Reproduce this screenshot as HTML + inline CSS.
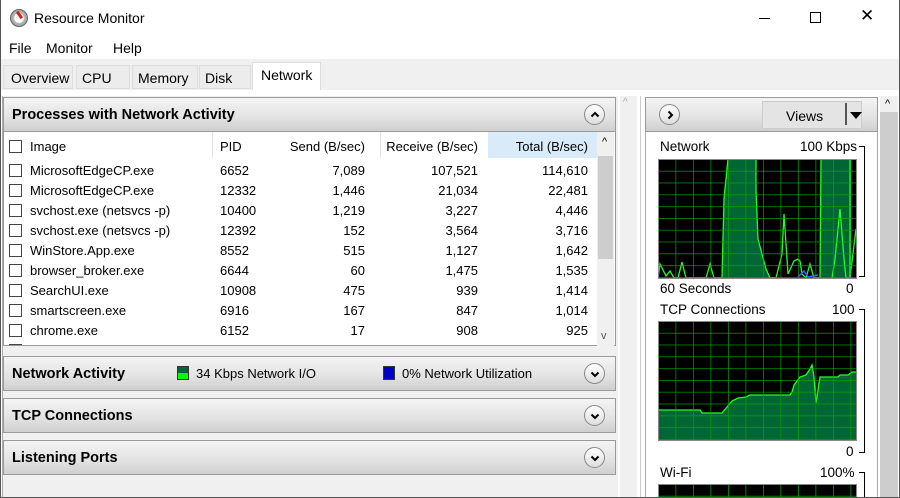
<!DOCTYPE html><html><head><style>
*{box-sizing:border-box;margin:0;padding:0}
body{width:900px;height:498px;overflow:hidden;background:#fff;font-family:"Liberation Sans",sans-serif;font-size:13px;color:#000;position:relative}
.a{position:absolute;white-space:nowrap}
.hdr{position:absolute;background:linear-gradient(#f4f4f4,#e2e2e2 60%,#cfcfcf);border:1px solid #9a9a9a;font-weight:bold;font-size:14.5px}
.hdr span{position:absolute;left:8px;top:9px}
.circ{position:absolute;width:21px;height:21px;border-radius:50%;border:1px solid #888;background:linear-gradient(#fff,#ddd)}
.circ svg{position:absolute;left:5px;top:5px}
.row{position:absolute;left:3px;width:593px;height:20px;white-space:nowrap}
.row div{position:absolute;top:3px;white-space:nowrap}
.cb{width:13px;height:13px;border:1px solid #444;background:#fff;top:4px!important;left:6px}
.r{text-align:right}
</style></head><body>
<div class="a" style="left:10px;top:9px;width:18px;height:18px;border-radius:50%;background:radial-gradient(#fff 40%,#bbb 45%,#888);border:1px solid #666"></div>
<div class="a" style="left:18px;top:11px;width:3px;height:8px;background:#c22;transform:rotate(-35deg)"></div>
<div class="a" style="left:34px;top:10px;font-size:14px">Resource Monitor</div>
<div class="a" style="left:759px;top:18px;width:11px;height:1px;background:#000"></div>
<div class="a" style="left:810px;top:12px;width:11px;height:11px;border:1px solid #000"></div>
<div class="a" style="left:860px;top:6px;font-size:17px">✕</div>
<div class="a" style="left:9px;top:40px;font-size:14px">File</div>
<div class="a" style="left:46px;top:40px;font-size:14px">Monitor</div>
<div class="a" style="left:113px;top:40px;font-size:14px">Help</div>
<div class="a" style="left:0;top:59px;width:900px;height:439px;background:#f0f0f0"></div>
<div class="a" style="left:3px;top:65px;width:70px;height:24px;background:#ececec;border:1px solid #ddd"></div>
<div class="a" style="left:11px;top:70px;font-size:14px">Overview</div>
<div class="a" style="left:76px;top:65px;width:54px;height:24px;background:#ececec;border:1px solid #ddd"></div>
<div class="a" style="left:82px;top:70px;font-size:14px">CPU</div>
<div class="a" style="left:132px;top:65px;width:66px;height:24px;background:#ececec;border:1px solid #ddd"></div>
<div class="a" style="left:138px;top:70px;font-size:14px">Memory</div>
<div class="a" style="left:199px;top:65px;width:52px;height:24px;background:#ececec;border:1px solid #ddd"></div>
<div class="a" style="left:205px;top:70px;font-size:14px">Disk</div>
<div class="a" style="left:252px;top:62px;width:69px;height:28px;background:#fff;border:1px solid #ddd;border-bottom:none"></div>
<div class="a" style="left:261px;top:67px;font-size:14px">Network</div>
<div class="a" style="left:0;top:90px;width:900px;height:408px;background:#fff"></div>
<div class="a" style="left:2px;top:96px;width:616px;height:402px;background:#f0f0f0;border-left:1px solid #aaa"></div>
<div class="a" style="left:620px;top:96px;width:17px;height:402px;background:#f0f0f0"></div>
<div class="a" style="left:623px;top:97px;font-size:10px;color:#aaa">^</div>
<div class="a" style="left:640px;top:96px;width:1px;height:402px;background:#ccc"></div>
<div class="hdr" style="left:3px;top:97px;width:613px;height:35px"><span>Processes with Network Activity</span><div class="circ" style="left:580px;top:6px"><svg width="10" height="10"><path d="M1.5 6.5L5 3L8.5 6.5" stroke="#000" stroke-width="2" fill="none"/></svg></div></div>
<div class="a" style="left:3px;top:132px;width:613px;height:214px;background:#fff;border:1px solid #999;border-top:none"></div>
<div class="a" style="left:488px;top:132px;width:109px;height:26px;background:#d9ebf9"></div>
<div class="a" style="left:212px;top:132px;width:1px;height:26px;background:#e5e5e5"></div>
<div class="a" style="left:380px;top:132px;width:1px;height:26px;background:#e5e5e5"></div>
<div class="a" style="left:597px;top:132px;width:17px;height:214px;background:#f0f0f0"></div>
<div class="a" style="left:598px;top:156px;width:15px;height:103px;background:#cdcdcd"></div>
<div class="a" style="left:602px;top:136px;font-size:11px">^</div>
<div class="a" style="left:601px;top:330px;font-size:11px;color:#555">v</div>
<div class="row" style="top:136px"><div class="cb"></div><div style="left:27px">Image</div><div style="left:217px">PID</div><div class="r" style="left:262px;width:100px">Send (B/sec)</div><div class="r" style="left:375px;width:100px">Receive (B/sec)</div><div class="r" style="left:485px;width:100px">Total (B/sec)</div></div>
<div style="position:absolute;left:0;top:160px;width:597px;height:185px;overflow:hidden">
<div class="row" style="top:0px"><div class="cb"></div><div style="left:27px">MicrosoftEdgeCP.exe</div><div style="left:217px">6652</div><div class="r" style="left:290px;width:72px">7,089</div><div class="r" style="left:380px;width:95px">107,521</div><div class="r" style="left:490px;width:95px">114,610</div></div>
<div class="row" style="top:20px"><div class="cb"></div><div style="left:27px">MicrosoftEdgeCP.exe</div><div style="left:217px">12332</div><div class="r" style="left:290px;width:72px">1,446</div><div class="r" style="left:380px;width:95px">21,034</div><div class="r" style="left:490px;width:95px">22,481</div></div>
<div class="row" style="top:40px"><div class="cb"></div><div style="left:27px">svchost.exe (netsvcs -p)</div><div style="left:217px">10400</div><div class="r" style="left:290px;width:72px">1,219</div><div class="r" style="left:380px;width:95px">3,227</div><div class="r" style="left:490px;width:95px">4,446</div></div>
<div class="row" style="top:60px"><div class="cb"></div><div style="left:27px">svchost.exe (netsvcs -p)</div><div style="left:217px">12392</div><div class="r" style="left:290px;width:72px">152</div><div class="r" style="left:380px;width:95px">3,564</div><div class="r" style="left:490px;width:95px">3,716</div></div>
<div class="row" style="top:80px"><div class="cb"></div><div style="left:27px">WinStore.App.exe</div><div style="left:217px">8552</div><div class="r" style="left:290px;width:72px">515</div><div class="r" style="left:380px;width:95px">1,127</div><div class="r" style="left:490px;width:95px">1,642</div></div>
<div class="row" style="top:100px"><div class="cb"></div><div style="left:27px">browser_broker.exe</div><div style="left:217px">6644</div><div class="r" style="left:290px;width:72px">60</div><div class="r" style="left:380px;width:95px">1,475</div><div class="r" style="left:490px;width:95px">1,535</div></div>
<div class="row" style="top:120px"><div class="cb"></div><div style="left:27px">SearchUI.exe</div><div style="left:217px">10908</div><div class="r" style="left:290px;width:72px">475</div><div class="r" style="left:380px;width:95px">939</div><div class="r" style="left:490px;width:95px">1,414</div></div>
<div class="row" style="top:140px"><div class="cb"></div><div style="left:27px">smartscreen.exe</div><div style="left:217px">6916</div><div class="r" style="left:290px;width:72px">167</div><div class="r" style="left:380px;width:95px">847</div><div class="r" style="left:490px;width:95px">1,014</div></div>
<div class="row" style="top:160px"><div class="cb"></div><div style="left:27px">chrome.exe</div><div style="left:217px">6152</div><div class="r" style="left:290px;width:72px">17</div><div class="r" style="left:380px;width:95px">908</div><div class="r" style="left:490px;width:95px">925</div></div>
<div class="row" style="top:180px"><div class="cb"></div><div style="left:27px">svchost.exe (netsvcs -p)</div><div style="left:217px">10952</div><div class="r" style="left:290px;width:72px">733</div><div class="r" style="left:380px;width:95px">144</div><div class="r" style="left:490px;width:95px">876</div></div>
</div>
<div class="hdr" style="left:3px;top:356px;width:613px;height:35px"><span>Network Activity</span><div class="circ" style="left:580px;top:6px"><svg width="10" height="10"><path d="M1.5 3.5L5 7L8.5 3.5" stroke="#000" stroke-width="2" fill="none"/></svg></div>
<div class="a" style="left:173px;top:9px;width:12px;height:14px;background:linear-gradient(#063 50%,#0f0 50%);border:1px solid #333"></div>
<div class="a" style="left:192px;top:9px;font-weight:normal;font-size:13px">34 Kbps Network I/O</div>
<div class="a" style="left:379px;top:9px;width:12px;height:14px;background:#0000c0;border:1px solid #333"></div>
<div class="a" style="left:398px;top:9px;font-weight:normal;font-size:13px">0% Network Utilization</div></div>
<div class="hdr" style="left:3px;top:398px;width:613px;height:35px"><span>TCP Connections</span><div class="circ" style="left:580px;top:6px"><svg width="10" height="10"><path d="M1.5 3.5L5 7L8.5 3.5" stroke="#000" stroke-width="2" fill="none"/></svg></div></div>
<div class="hdr" style="left:3px;top:440px;width:613px;height:35px"><span>Listening Ports</span><div class="circ" style="left:580px;top:6px"><svg width="10" height="10"><path d="M1.5 3.5L5 7L8.5 3.5" stroke="#000" stroke-width="2" fill="none"/></svg></div></div>
<div class="a" style="left:645px;top:97px;width:233px;height:401px;background:#fff;border:1px solid #aaa"></div>
<div class="hdr" style="left:645px;top:97px;width:233px;height:35px"><div class="circ" style="left:13px;top:6px"><svg width="10" height="10"><path d="M3.5 1.5L7 5L3.5 8.5" stroke="#000" stroke-width="2" fill="none"/></svg></div>
<div class="a" style="left:116px;top:3px;width:100px;height:28px;background:#e4e4e4;border:1px solid #ccc"></div>
<div class="a" style="left:140px;top:10px;font-weight:normal;font-size:14px">Views</div>
<div class="a" style="left:199px;top:5px;width:2px;height:22px;background:#555"></div>
<div class="a" style="left:204px;top:14px;border:6px solid transparent;border-top:7px solid #000"></div></div>
<div class="a" style="left:880px;top:96px;width:18px;height:402px;background:#f0f0f0"></div>
<div class="a" style="left:885px;top:98px;font-size:11px">^</div>
<div class="a" style="left:880px;top:112px;width:18px;height:386px;background:#cdcdcd"></div>
<div class="a" style="left:660px;top:139px;font-size:13.5px">Network</div>
<div class="a" style="left:800px;top:139px;font-size:13.5px">100 Kbps</div>
<div class="a" style="left:859px;top:146px;width:6px;height:131px;border:1px solid #000;border-left:none"></div>
<div class="a" style="left:660px;top:281px;font-size:13.5px">60 Seconds</div>
<div class="a" style="left:846px;top:281px;font-size:13.5px">0</div>
<div class="a" style="left:660px;top:302px;font-size:13.5px">TCP Connections</div>
<div class="a" style="left:832px;top:302px;font-size:13.5px">100</div>
<div class="a" style="left:859px;top:309px;width:6px;height:144px;border:1px solid #000;border-left:none"></div>
<div class="a" style="left:846px;top:444px;font-size:13.5px">0</div>
<div class="a" style="left:660px;top:465px;font-size:13.5px">Wi-Fi</div>
<div class="a" style="left:820px;top:465px;font-size:13.5px">100%</div>
<div class="a" style="left:859px;top:472px;width:6px;height:26px;border-top:1px solid #000;border-right:1px solid #000"></div>
<svg class="a" style="left:658px;top:159px" width="199" height="120">
<defs><pattern id="g" width="17.5" height="11.8" patternUnits="userSpaceOnUse" x="0" y="0"><path d="M0 0V12M0 0H18" stroke="#0a0" stroke-width="1.5" fill="none"/></pattern></defs>
<rect width="199" height="120" fill="#000"/>
<path d="M64 119 L66 40 L70 0 L98 0 L98 30 L100 80 L108 110 L112 119 Z M162 119 L163 0 L192 0 L192 119 Z" fill="#063"/>
<path d="M0 119 L2 105 L8 117 L12 112 L16 119 L20 119 L24 103 L28 119 L48 119 L52 105 L56 119 L64 119 L66 40 L70 0 M98 0 L98 30 L100 80 L108 110 L112 119 L118 119 L124 95 L126 55 L130 115 L136 102 L140 100 L142 102 L144 115 L148 119 L152 105 L156 119 L162 119 L163 0 M192 0 L192 119 M174 119 L177 100 L182 50 L186 100 L188 119 L192 119 L198 70" fill="none" stroke="#2f2" stroke-width="1.3"/>
<rect width="199" height="120" fill="url(#g)" opacity=".9"/>
<path d="M140 118 L146 112 L150 118 L160 116" stroke="#36f" fill="none" stroke-width="1.5"/>
<rect x=".5" y=".5" width="198" height="119" fill="none" stroke="#888"/>
</svg>
<svg class="a" style="left:658px;top:321px" width="199" height="120">
<rect width="199" height="120" fill="#000"/>
<path d="M0 89 L42 89 L44 92 L64 92 L74 80 L80 77 L88 76 L92 74 L132 74 L134 71 L136 64 L142 56 L148 54 L152 48 L154 44 L156 56 L158 82 L162 56 L180 56 L182 54 L190 54 L194 51 L199 51 V120 H0 Z" fill="#063" stroke="#2f2" stroke-width="1.3"/>
<rect width="199" height="120" fill="url(#g)" opacity=".9"/>
<rect x=".5" y=".5" width="198" height="119" fill="none" stroke="#888"/>
</svg>
<svg class="a" style="left:658px;top:484px" width="199" height="14"><rect width="199" height="14" fill="#000"/><rect width="199" height="14" fill="url(#g)"/><rect x=".5" y=".5" width="198" height="20" fill="none" stroke="#888"/></svg>
<div class="a" style="left:0;top:0;width:900px;height:498px;border:1px solid #555;border-top:none;pointer-events:none"></div>
</body></html>
